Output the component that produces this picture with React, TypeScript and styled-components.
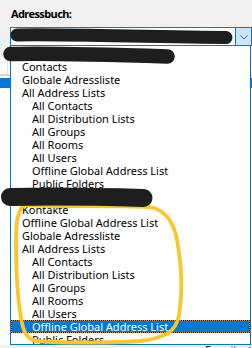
import styled, { createGlobalStyle, css } from "styled-components";

const GlobalStyle = createGlobalStyle`
  html, body {
    margin: 0;
    padding: 0;
  }
  body {
    background: #f0f0f0;
    font-family: "Noto Sans", "Open Sans", sans-serif;
    font-size: 11px;
    color: #000;
  }
`;

const Page = styled.div`
  position: relative;
  width: 252px;
  height: 348px;
  overflow: hidden;
`;

const Top = styled.div`
  padding: 6px 0 0 10px;
`;

const Label = styled.div`
  padding-left: 1px;
  font-weight: 700;
  line-height: 15px;
  letter-spacing: -0.6px;
`;

const Combo = styled.div`
  box-sizing: border-box;
  display: flex;
  justify-content: flex-end;
  width: 242px;
  height: 19px;
  margin-top: 6px;
  border: 1px solid #0078d7;
  background: #fff;
`;

const ArrowButton = styled.div`
  box-sizing: border-box;
  display: flex;
  align-items: center;
  justify-content: center;
  width: 16px;
  height: 100%;
  padding-top: 2px;
  border-left: 1px solid #0078d7;
  background: #cce4f7;
`;

// the address list window that sits behind the open dropdown
const Results = styled.div`
  height: 288px;
  margin-top: 11px;
  background: #fff;
`;

const ResultsHeader = styled.div`
  display: flex;
  height: 17px;
  border-bottom: 2px solid #d6d6d6;
`;

const HeaderCell = styled.div<{ $w: number }>`
  width: ${(p) => p.$w}px;
  border-right: 1px solid #e3e3e3;
`;

const SelectedResult = styled.div`
  height: 10px;
  margin-top: 2px;
  background: #0078d7;
`;

const Footer = styled.div`
  margin-top: -2px;
  padding-left: 205px;
  line-height: 13px;
  color: #333;
`;

const Popup = styled.div`
  position: absolute;
  top: 45px;
  left: 10px;
  box-sizing: border-box;
  width: 241px;
  height: 300px;
  padding-top: 1px;
  border: 1px solid #0078d7;
  background: #fff;
  overflow: hidden;
`;

const Row = styled.div<{ $level: number; $selected?: boolean }>`
  height: 13px;
  padding-left: ${(p) => p.$level * 10 + 1}px;
  line-height: 13px;
  white-space: nowrap;
  ${(p) =>
    p.$selected &&
    css`
      background: #0078d7;
      color: #fff;
      box-shadow: inset 0 0 0 1px #f08a24;
      outline: 1px dotted #111;
      outline-offset: -1px;
    `}
`;

const Marks = styled.svg`
  position: absolute;
  top: 0;
  left: 0;
  pointer-events: none;
`;

type Item = { label: string; level: number; selected?: boolean };

const items: Item[] = [
  { label: "", level: 0 },
  { label: "Contacts", level: 1 },
  { label: "Globale Adressliste", level: 1 },
  { label: "All Address Lists", level: 1 },
  { label: "All Contacts", level: 2 },
  { label: "All Distribution Lists", level: 2 },
  { label: "All Groups", level: 2 },
  { label: "All Rooms", level: 2 },
  { label: "All Users", level: 2 },
  { label: "Offline Global Address List", level: 2 },
  { label: "Public Folders", level: 2 },
  { label: "", level: 0 },
  { label: "Kontakte", level: 1 },
  { label: "Offline Global Address List", level: 1 },
  { label: "Globale Adressliste", level: 1 },
  { label: "All Address Lists", level: 1 },
  { label: "All Contacts", level: 2 },
  { label: "All Distribution Lists", level: 2 },
  { label: "All Groups", level: 2 },
  { label: "All Rooms", level: 2 },
  { label: "All Users", level: 2 },
  { label: "Offline Global Address List", level: 2, selected: true },
  { label: "Public Folders", level: 2 },
];

export default function App() {
  return (
    <Page>
      <GlobalStyle />
      <Top>
        <Label>Adressbuch:</Label>
        <Combo>
          <ArrowButton>
            <svg width="8" height="5" viewBox="0 0 8 5">
              <polyline points="0.5,0.5 4,4 7.5,0.5" fill="none" stroke="#606060" strokeWidth="1" />
            </svg>
          </ArrowButton>
        </Combo>
      </Top>

      <Results>
        <ResultsHeader>
          <HeaderCell $w={7} />
        </ResultsHeader>
        <SelectedResult />
      </Results>
      <Footer>Erweitert</Footer>

      <Popup>
        {items.map((it, i) => (
          <Row key={i} $level={it.level} $selected={it.selected}>
            {it.label}
          </Row>
        ))}
      </Popup>

      {/* hand-drawn redactions and highlight on top of the screenshot */}
      <Marks width="252" height="348" viewBox="0 0 252 348">
        <path
          d="M24 205 C60 207 120 205 150 207 C166 210 174 224 177 240 C181 262 183 290 179 315 C176 332 165 338 140 341 C110 343 60 343 36 341 C26 339 23 330 21 318 C18 300 16 270 16 245 C16 228 16 212 24 205"
          fill="none"
          stroke="#fbc62a"
          strokeWidth="3.8"
          strokeLinecap="round"
        />
        <g fill="none" stroke="#1e1e1e" strokeLinecap="round">
          <path d="M17 35 C60 34 120 36.5 226 37.5" strokeWidth="13" />
          <path d="M10.5 54 C50 53 120 55 167.5 56.5" strokeWidth="14.5" />
          <path d="M10 197 C50 196 110 197 143.5 198" strokeWidth="18" />
        </g>
      </Marks>
    </Page>
  );
}
